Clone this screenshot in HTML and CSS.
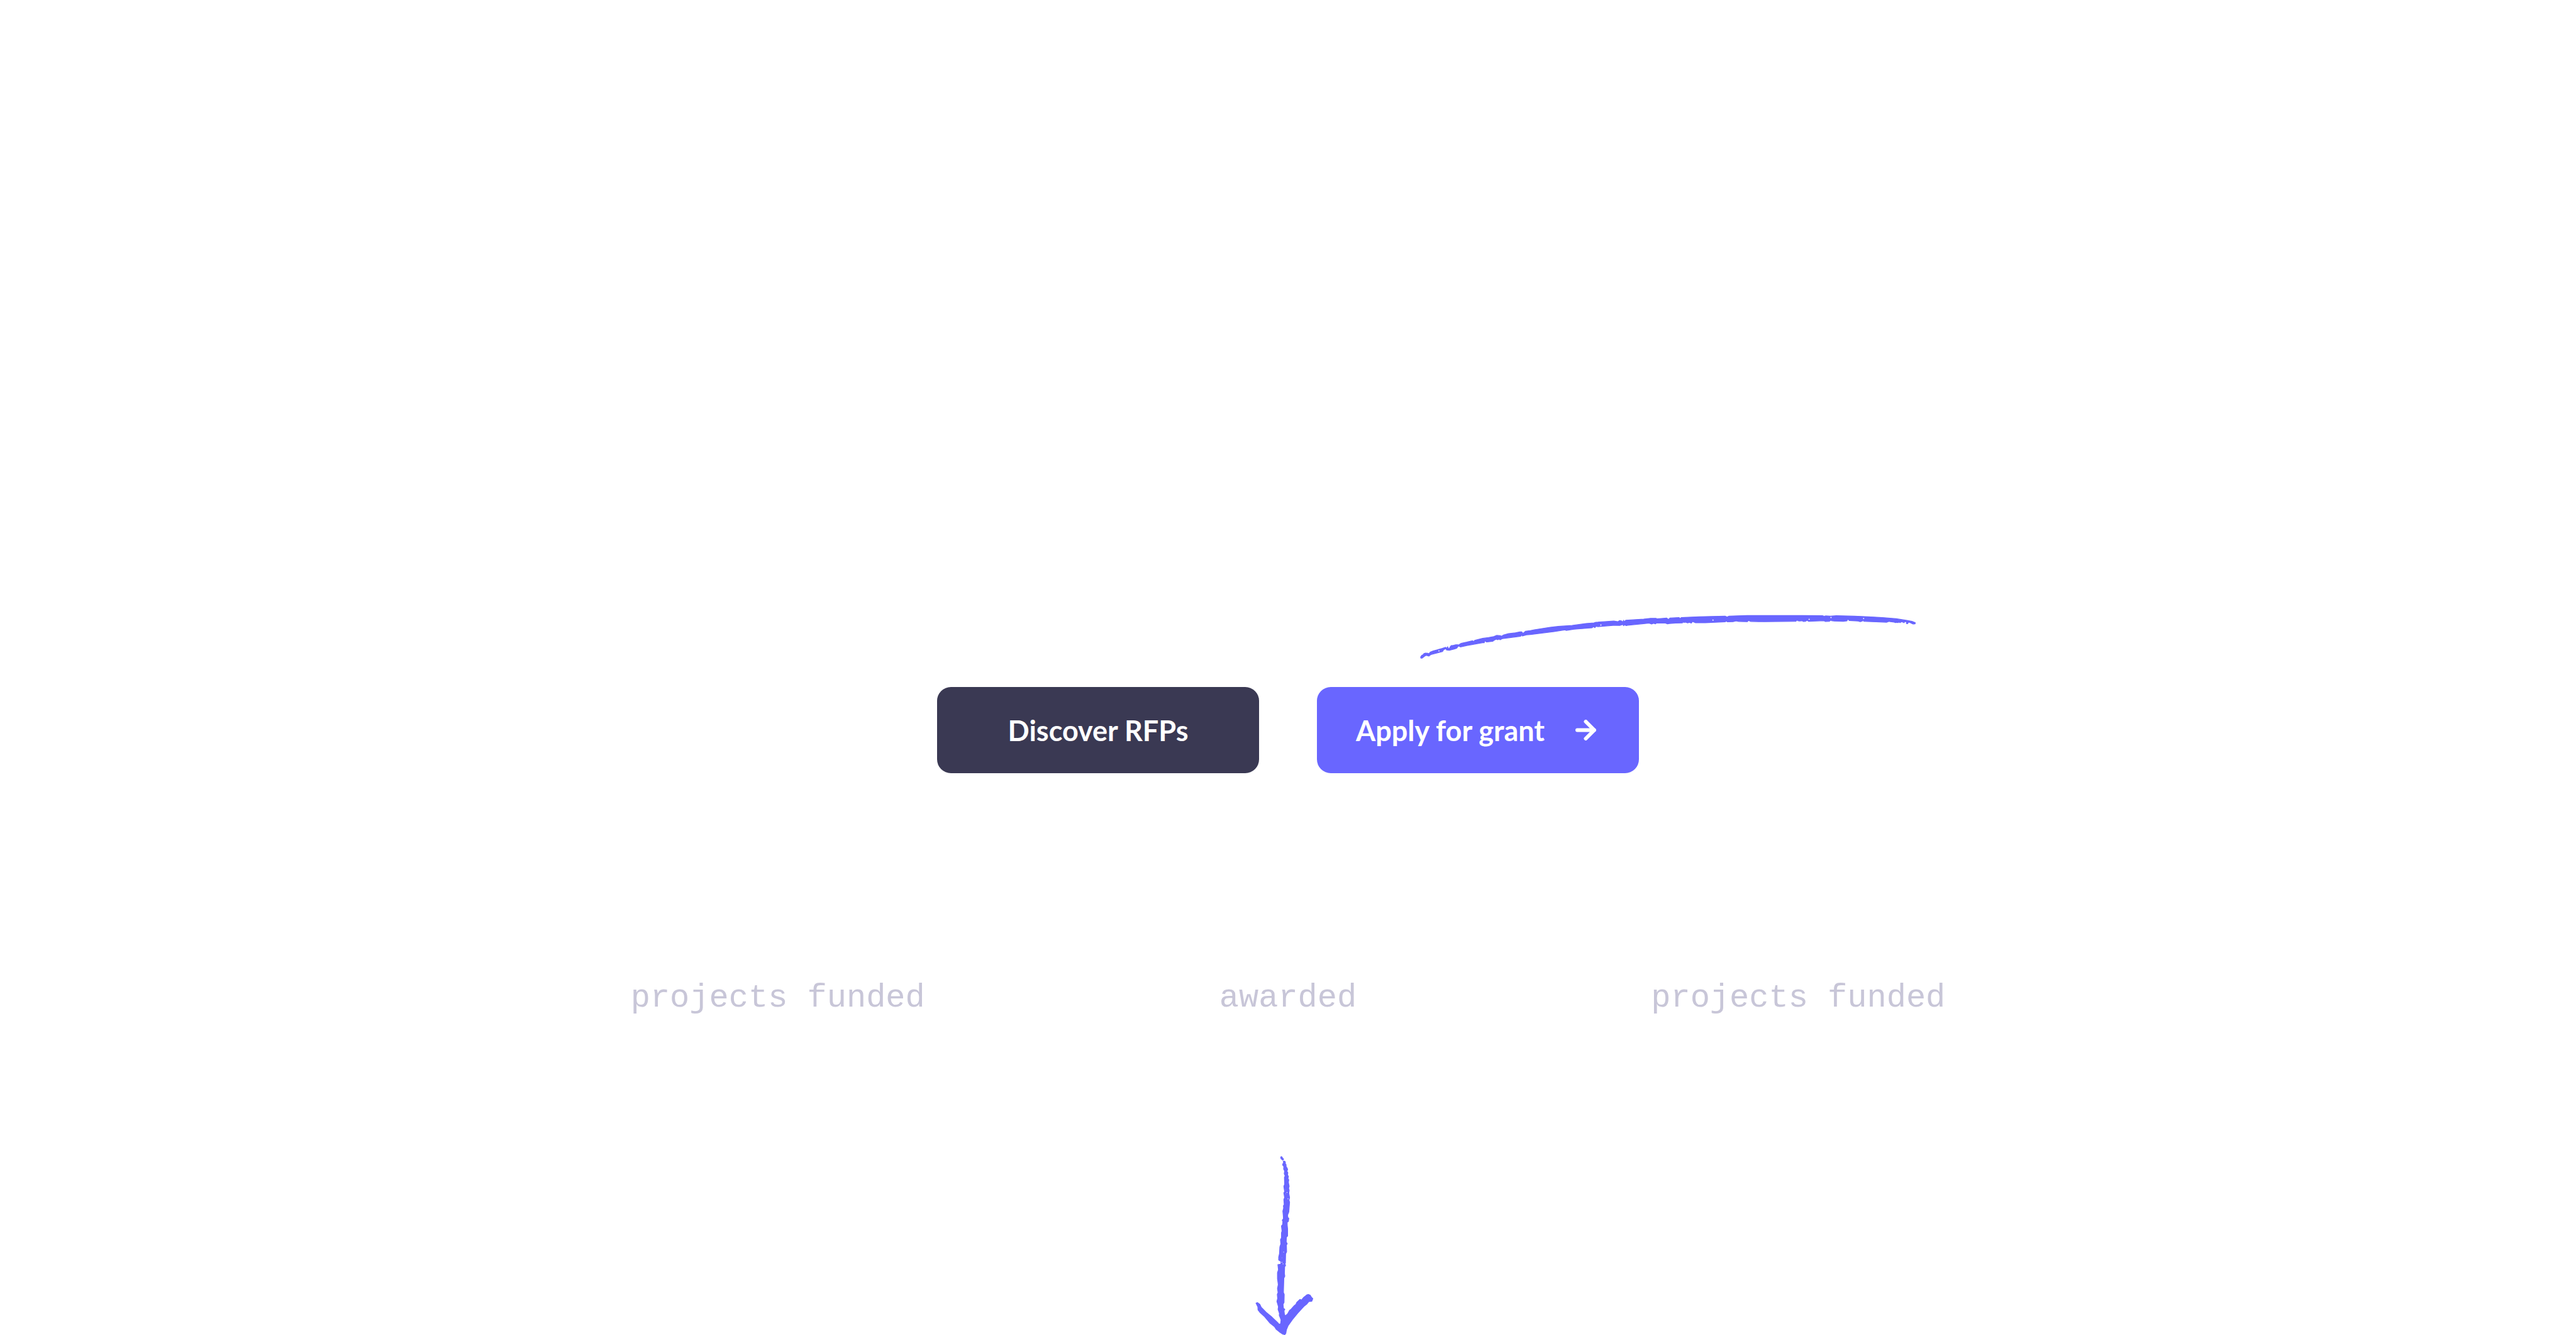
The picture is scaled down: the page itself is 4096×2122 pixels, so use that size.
FILE: index.html
```html
<!DOCTYPE html>
<html lang="en">
<head>
<meta charset="utf-8">
<meta name="viewport" content="width=device-width, initial-scale=1">
<title>Grants</title>
<link rel="stylesheet" href="styles.css">
</head>
<body>
<main class="hero">
  <div class="underline-row">
    <svg class="underline" viewBox="62 62 2500 224" aria-hidden="true">
      <path fill="currentColor" stroke="currentColor" stroke-width="4" stroke-linejoin="round" d="M68 275L74 266L80 264L84 258L92 255L104 256L110 259L116 250L132 244L150 239L175 232L194 226L200 231L204 223L207 231L212 233L218 222L222 217L232 216L245 213L256 213L260 216L262 212L272 206L300 200L324 194L330 193L334 198L340 191L380 181L410 177L436 172L450 166L468 167L476 170L485 164L510 157L545 153L568 148L577 148L580 154L586 154L596 145L620 142L640 138L720 125L760 121L830 116L900 106L940 103L950 100L1040 94L1060 97L1070 91L1080 94L1083 98L1086 98L1089 90L1093 97L1100 90L1190 84L1225 80L1252 80L1258 83L1290 80L1306 79L1312 84L1318 84L1322 79L1368 76L1374 82L1380 76L1470 72L1600 69L1610 74L1620 69L1710 66L1990 66L2090 67L2098 70L2105 68L2130 69L2160 67L2250 69L2320 72L2390 76L2460 82L2510 90L2540 95L2557 102L2556 108L2546 109L2530 101L2523 99L2518 107L2512 106L2514 99L2505 96L2500 102L2494 99L2488 97L2480 102L2475 98L2470 102L2463 100L2458 102L2450 99L2432 97L2425 95L2412 100L2360 98L2298 95L2296 86L2292 93L2280 97L2270 94L2225 91L2217 83L2213 93L2195 95L2150 94L2135 92L2133 88L2125 95L2105 96L2098 92L2020 95L2012 90L2005 95L1995 96L1988 92L1975 94L1965 92L1963 87L1956 95L1800 97L1730 96L1717 91L1712 97L1670 96L1655 93L1640 97L1612 98L1606 93L1600 98L1500 102L1450 102L1436 96L1430 104L1420 100L1412 103L1400 99L1392 101L1390 95L1385 103L1350 104L1320 106L1310 108L1300 104L1255 103L1250 108L1240 105L1230 109L1218 104L1190 107L1110 115L1102 117L1095 112L1090 117L1085 111L1070 116L1045 115L960 122L950 120L945 127L938 122L930 128L840 135L800 141L795 138L740 147L690 153L620 162L600 163L580 169L575 163L572 170L565 171L480 182L468 188L462 184L456 188L450 185L440 189L430 196L400 199L390 193L388 203L384 202L300 217L268 224L258 219L250 230L240 234L212 241L198 239L196 232L184 238L178 247L120 262L110 270L96 266L86 272L76 280L69 280Z"/>
      <g fill="#fff">
        <circle cx="160" cy="244" r="3"/><circle cx="975" cy="114" r="3"/><circle cx="1539" cy="89" r="3"/><circle cx="2023" cy="85" r="3"/><circle cx="2133" cy="76" r="3"/><circle cx="2297" cy="81" r="3"/>
      </g>
    </svg>
  </div>

  <nav class="actions" aria-label="Grant actions">
    <button class="button button-dark" type="button">Discover RFPs</button>
    <button class="button button-primary" type="button">
      <span>Apply for grant</span>
      <svg class="button-arrow" viewBox="0 0 33 33" aria-hidden="true">
        <path d="M3 16.500H30M16.500 3L30 16.500L16.500 30" fill="none" stroke="currentColor" stroke-width="6" stroke-linecap="round" stroke-linejoin="round"/>
      </svg>
    </button>
  </nav>

  <div class="stats">
    <p class="stat">projects funded</p>
    <p class="stat">awarded</p>
    <p class="stat">projects funded</p>
  </div>

  <svg class="scroll-arrow" viewBox="72 48 336 906" aria-hidden="true">
    <path fill="currentColor" stroke="currentColor" stroke-width="2" d="M202 57L208 54L214 62L219 68L215 75L207 70L203 65Z"/>
    <path fill="currentColor" stroke="currentColor" stroke-width="4" stroke-linejoin="round" d="M216 80L222 78L227 83L226 90L230 95L231 108L236 113L238 122L234 128L239 136L238 150L242 154L240 168L244 172L242 185L246 205L243 215L246 225L244 240L248 262L245 275L248 285L246 310L244 335L238 350L239 362L244 366L242 382L236 386L236 400L238 420L238 455L232 462L231 485L236 494L232 502L233 535L228 545L227 592L223 596L228 602L223 612L222 645L224 658L219 668L217 740L221 750L220 790L215 800L217 820L224 825L220 832L222 850L226 858L238 848L248 830L255 825L270 808L280 800L284 790L300 775L308 778L318 766L328 758L335 752L343 750L352 754L358 764L365 771L360 784L345 786L335 798L320 810L290 843L262 877L240 908L232 928L229 946L224 952L214 950L196 938L180 925L172 912L150 895L122 862L100 842L89 828L88 812L79 794L86 791L98 800L105 815L130 840L160 865L186 890L197 902L203 896L205 878L200 865L196 855L197 845L190 825L192 812L184 785L188 770L186 750L190 740L187 720L191 700L187 670L187 640L192 625L189 600L204 597L205 584L193 576L193 562L197 545L199 510L204 495L202 474L207 465L207 440L210 430L207 405L213 398L214 382L211 376L217 368L216 350L214 330L218 315L217 303L221 297L219 272L223 262L219 238L223 232L219 205L223 195L222 160L226 152L221 142L223 128L218 118L219 105L213 98L214 91L218 88Z"/>
    <g fill="#fff">
      <circle cx="229" cy="222" r="1"/><circle cx="235" cy="236" r="2"/><circle cx="228" cy="243" r="1"/><circle cx="240" cy="268" r="2"/><circle cx="218" cy="536" r="2"/><circle cx="209" cy="565" r="1"/><circle cx="215" cy="596" r="2"/><circle cx="209" cy="588" r="2"/>
    </g>
  </svg>
</main>
</body>
</html>
```
FILE: styles.css
```css
:root {
  --primary: #6966ff;
  --dark: #3a3953;
  --muted: #c8c6d8;
}

* {
  box-sizing: border-box;
}

body {
  margin: 0;
  background: #fff;
}

.hero {
  display: flex;
  flex-direction: column;
  align-items: center;
  min-height: 100vh;
  padding-top: 977px;
  color: var(--primary);
}

.underline-row {
  display: flex;
  justify-content: flex-end;
  width: 100%;
  max-width: 1998px;
}

.underline {
  display: block;
  width: 790px;
  height: 71px;
}

.actions {
  display: flex;
  gap: 92px;
  margin-top: 44px;
}

.button {
  display: flex;
  align-items: center;
  justify-content: center;
  width: 512px;
  height: 137px;
  padding: 0 60px;
  border: 0;
  border-radius: 22px;
  color: #fff;
  font: 700 45px/56px Lato, sans-serif;
  cursor: pointer;
}

.button-dark {
  background: var(--dark);
}

.button-primary {
  justify-content: space-between;
  padding-right: 68px;
  padding-left: 62px;
  background: var(--primary);
}

.button-arrow {
  width: 33px;
  height: 33px;
}

.stats {
  display: flex;
  justify-content: center;
  gap: 468px;
  margin-top: 328px;
}

.stat {
  margin: 0;
  color: var(--muted);
  font: 52px/60px "Liberation Mono", monospace;
}

.scroll-arrow {
  display: block;
  width: 106px;
  height: 286px;
  margin-top: auto;
}
```
